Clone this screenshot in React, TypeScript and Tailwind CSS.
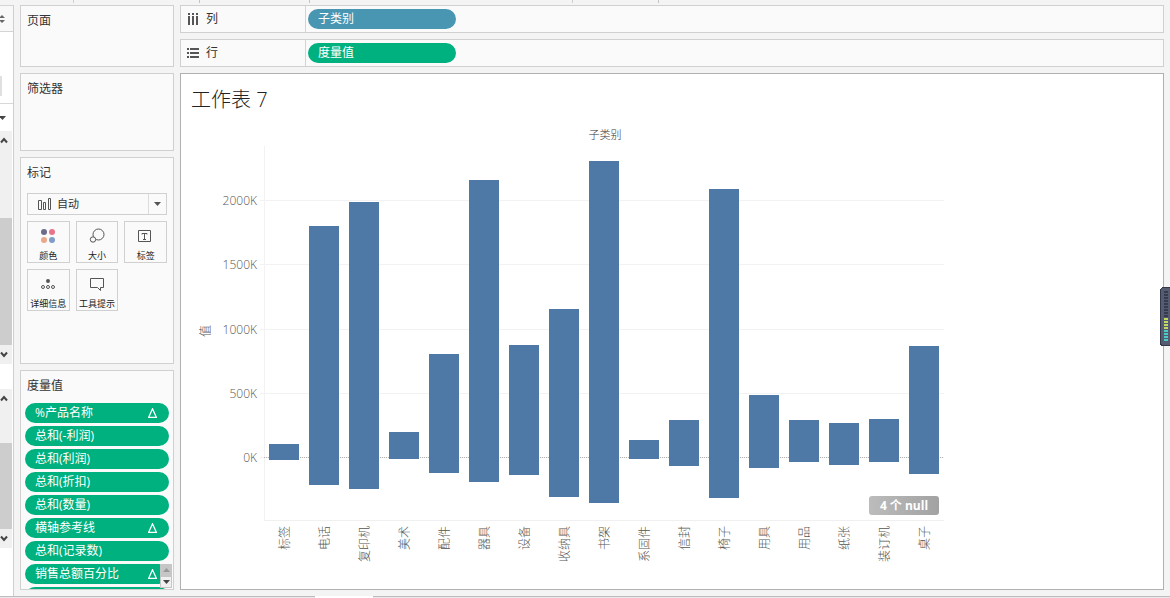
import type { ReactNode } from "react";

const shelves = [
  { label: "列", pill: "子类别", tone: "bg-[#4996b2]", vertical: true },
  { label: "行", pill: "度量值", tone: "bg-[#00b180]", vertical: false },
];

const measures = [
  { name: "%产品名称", calc: true },
  { name: "总和(-利润)", calc: false },
  { name: "总和(利润)", calc: false },
  { name: "总和(折扣)", calc: false },
  { name: "总和(数量)", calc: false },
  { name: "横轴参考线", calc: true },
  { name: "总和(记录数)", calc: false },
  { name: "销售总额百分比", calc: true },
];

// high / low are in thousands
const bars = [
  { name: "标签", high: 108, low: -18 },
  { name: "电话", high: 1803, low: -212 },
  { name: "复印机", high: 1990, low: -243 },
  { name: "美术", high: 200, low: -10 },
  { name: "配件", high: 809, low: -120 },
  { name: "器具", high: 2161, low: -190 },
  { name: "设备", high: 877, low: -134 },
  { name: "收纳具", high: 1157, low: -307 },
  { name: "书架", high: 2309, low: -352 },
  { name: "系固件", high: 138, low: -10 },
  { name: "信封", high: 293, low: -64 },
  { name: "椅子", high: 2092, low: -313 },
  { name: "用具", high: 488, low: -80 },
  { name: "用品", high: 293, low: -33 },
  { name: "纸张", high: 270, low: -58 },
  { name: "装订机", high: 302, low: -33 },
  { name: "桌子", high: 869, low: -128 },
];

const ticks = [2000, 1500, 1000, 500, 0];

const LEFT = 73;
const TOP = 24;
const BOTTOM = 398;
const ZERO = 336;
const STEP = 40;
const RIGHT = LEFT + STEP * bars.length;
const y = (v: number) => Math.round(ZERO - v * 0.1285);

function ShelfIcon({ vertical }: { vertical: boolean }) {
  return (
    <svg
      width="12"
      height="12"
      viewBox="0 0 12 12"
      fill="#555"
      shapeRendering="crispEdges"
      className={vertical ? "rotate-90" : ""}
      aria-hidden="true"
    >
      {[1, 5, 9].map((row) => (
        <g key={row}>
          <rect x="0" y={row} width="2" height="2" />
          <rect x="3" y={row} width="9" height="2" />
        </g>
      ))}
    </svg>
  );
}

function Card({ title, className, children }: { title: string; className: string; children?: ReactNode }) {
  return (
    <section className={`flex flex-col overflow-hidden border border-[#d0d0d0] bg-[#fafafa] ${className}`}>
      <h2 className="shrink-0 px-[6px] pt-[5px] text-xs leading-5 text-[#333]">{title}</h2>
      {children}
    </section>
  );
}

function MarkButton({ label, children }: { label: string; children: ReactNode }) {
  return (
    <button className="flex h-[42px] flex-col items-center justify-between border border-[#d0d0d0] bg-[#fafafa] pt-[6px] text-[9px] leading-3 whitespace-nowrap text-[#222]">
      <svg width="16" height="16" viewBox="0 0 16 16" fill="none" stroke="#555" aria-hidden="true">
        {children}
      </svg>
      {label}
    </button>
  );
}

function ScrollArrow({ up }: { up?: boolean }) {
  return (
    <button
      aria-label={up ? "向上滚动" : "向下滚动"}
      className="flex h-[19px] w-full shrink-0 items-center justify-end bg-[#f0f0f0] pr-1"
    >
      <svg width="8" height="7" viewBox="0 0 8 7" fill="none" stroke="#444" strokeWidth="2" aria-hidden="true">
        <path d={up ? "M1 5.5 4 2l3 3.5" : "M1 1.5 4 5l3-3.5"} />
      </svg>
    </button>
  );
}

// Lower edge of the toolbar, only its separators reach down here
function ToolbarEdge() {
  return (
    <header className="flex h-[5px] shrink-0 items-start">
      <div className="h-[3px] w-[74px] border-r border-[#d0d0d0]" />
      <div className="h-[3px] w-[126px] border-r border-[#c4c4c4]" />
      <div className="h-[3px] w-[110px] border-r border-[#c4c4c4]" />
      <div className="h-[3px] w-[263px] border-r border-[#d0d0d0]" />
      <div className="h-[3px] w-[86px] border-r border-[#c4c4c4]" />
    </header>
  );
}

// The right edge of the data pane, the rest of it is scrolled out of view
function DataPaneEdge() {
  return (
    <aside className="flex w-[14px] shrink-0 flex-col border-r border-[#cfcfcf] bg-white">
      <div className="flex h-[27px] shrink-0 items-center border-y border-[#d4d4d4] bg-[#f8f8f8]">
        <svg width="6" height="8" viewBox="0 0 6 8" fill="#666" aria-hidden="true">
          <path d="M2 0 5 3H-1zM2 8 5 5H-1z" />
        </svg>
      </div>
      <div className="flex h-[71px] shrink-0 flex-col justify-end pb-[7px]">
        <div className="h-5 w-[2px] bg-[#e0e0e0]" />
      </div>
      <div className="flex h-7 shrink-0 items-center border-t border-[#d8d8d8]">
        <svg width="6" height="4" viewBox="0 0 6 4" fill="#444" aria-hidden="true">
          <path d="M-1 0h7L2.5 4z" />
        </svg>
      </div>
      <div className="flex h-[233px] w-3 shrink-0 flex-col bg-[#f0f0f0]">
        <ScrollArrow up />
        <div className="mt-auto h-[127px] bg-[#cdcdcd]" />
        <ScrollArrow />
      </div>
      <div className="h-[25px] shrink-0" />
      <div className="flex h-[159px] w-3 shrink-0 flex-col bg-[#f0f0f0]">
        <ScrollArrow up />
        <div className="mt-auto h-[86px] bg-[#cdcdcd]" />
        <ScrollArrow />
      </div>
    </aside>
  );
}

function MarksCard() {
  return (
    <Card title="标记" className="h-[207px] shrink-0">
      <div className="mt-[10px] flex flex-col gap-[6px] px-[6px]">
        <div className="relative h-[22px] border border-[#d0d0d0] bg-[#fafafa]">
          <select
            aria-label="标记类型"
            className="block h-full w-full appearance-none bg-transparent pl-[29px] text-[11px] leading-5 text-[#333] outline-none"
          >
            <option>自动</option>
          </select>
          <svg
            width="14"
            height="12"
            viewBox="0 0 14 12"
            fill="none"
            stroke="#555"
            className="pointer-events-none absolute top-1 left-[10px]"
            aria-hidden="true"
          >
            <path d="M.5 2.5h3v9h-3zM5.5 4.5h2v7h-2zM10.5.5h2v11h-2z" />
          </svg>
          <span className="pointer-events-none absolute inset-y-0 right-0 flex w-[18px] items-center justify-center border-l border-[#dcdcdc]">
            <svg width="7" height="4" viewBox="0 0 7 4" fill="#555" aria-hidden="true">
              <path d="M0 0h7L3.5 4z" />
            </svg>
          </span>
        </div>
        <div className="grid grid-cols-3 gap-[6px]">
          <MarkButton label="颜色">
            <g stroke="none">
              <circle cx="4" cy="4" r="3" fill="#6b6b8a" />
              <circle cx="12" cy="4" r="3" fill="#e8738a" />
              <circle cx="4" cy="12" r="3" fill="#eba78b" />
              <circle cx="12" cy="12" r="3" fill="#7f9dc6" />
            </g>
          </MarkButton>
          <MarkButton label="大小">
            <circle cx="9.5" cy="6.5" r="5.5" />
            <circle cx="4" cy="11.5" r="2.7" fill="#fafafa" />
          </MarkButton>
          <MarkButton label="标签">
            <path d="M.5 2.5h12v11h-12z" />
            <path d="M4 6.5v-1h5v1M6.5 5.5v6M5 11.5h3" />
          </MarkButton>
          <MarkButton label="详细信息">
            <circle cx="8" cy="5" r="2" fill="#555" stroke="none" />
            <circle cx="3" cy="11" r="1.5" />
            <circle cx="8" cy="11" r="1.5" />
            <circle cx="13" cy="11" r="1.5" />
          </MarkButton>
          <MarkButton label="工具提示">
            <path d="M1.5 2.5h13v9h-3v3l-3-3h-7z" />
          </MarkButton>
        </div>
      </div>
    </Card>
  );
}

function MeasuresCard() {
  return (
    <Card title="度量值" className="relative min-h-0 flex-1">
      <ul className="mt-[7px] flex flex-col gap-[3px] px-1">
        {measures.map((m) => (
          <li
            key={m.name}
            className="flex h-5 shrink-0 items-center justify-between rounded-full bg-[#00b180] pr-3 pl-[10px] text-xs leading-5 text-white"
          >
            {m.name}
            {m.calc && (
              <svg
                width="9"
                height="10"
                viewBox="0 0 9 10"
                fill="none"
                stroke="#fff"
                strokeWidth="1.3"
                aria-label="表计算"
              >
                <path d="M4.5.8 8.3 9.3H.7z" />
              </svg>
            )}
          </li>
        ))}
        <li className="h-5 shrink-0 rounded-full bg-[#00b180]" />
      </ul>
      <div className="absolute right-[1px] bottom-[1px] flex w-3 flex-col">
        <button aria-label="上一项" className="flex h-3 items-center justify-center bg-[#c6c6c6]">
          <svg width="7" height="4" viewBox="0 0 7 4" fill="#999" aria-hidden="true">
            <path d="M0 4h7L3.5 0z" />
          </svg>
        </button>
        <button aria-label="下一项" className="flex h-3 items-center justify-center border border-[#c6c6c6] bg-[#f0f0f0]">
          <svg width="7" height="4" viewBox="0 0 7 4" className="shrink-0" fill="#444" aria-hidden="true">
            <path d="M0 0h7L3.5 4z" />
          </svg>
        </button>
      </div>
    </Card>
  );
}

function Chart() {
  return (
    <svg width="764" height="460" viewBox="0 0 764 460" className="block font-light" role="img" aria-label="子类别">
      <g shapeRendering="crispEdges">
        {ticks.map((t) => (
          <rect key={t} x={LEFT - 4} y={y(t) - 1} width={RIGHT - LEFT + 4} height="1" fill="#f2f2f2" />
        ))}
        <rect x={LEFT} y={TOP} width="1" height={BOTTOM - TOP} fill="#f2f2f2" />
        <rect x={LEFT} y={BOTTOM} width={RIGHT - LEFT} height="1" fill="#f0f0f0" />
        <path d={`M${LEFT} ${ZERO - 0.5}H${RIGHT}`} stroke="#b4b4b4" strokeDasharray="1 1" />
        {bars.map((b, i) => (
          <rect
            key={b.name}
            x={LEFT + 5 + i * STEP}
            y={y(b.high)}
            width="30"
            height={y(b.low) - y(b.high)}
            fill="#4e79a7"
          />
        ))}
      </g>
      <text x={LEFT + 341} y="17" textAnchor="middle" fontSize="11" fill="#333">
        子类别
      </text>
      <g fontSize="12" fill="#555">
        {ticks.map((t) => (
          <text key={t} x={LEFT - 7} y={y(t) + 4} textAnchor="end">
            {t}K
          </text>
        ))}
        <text transform="translate(19 209) rotate(-90)" textAnchor="middle">
          值
        </text>
        {bars.map((b, i) => (
          <text key={b.name} transform={`translate(${LEFT + 25 + i * STEP} 404) rotate(-90)`} textAnchor="end">
            {b.name}
          </text>
        ))}
      </g>
    </svg>
  );
}

function VolumeMeter() {
  return (
    <svg
      width="10"
      height="59"
      viewBox="0 0 10 59"
      className="absolute top-[287px] right-0"
      shapeRendering="crispEdges"
      aria-hidden="true"
    >
      <rect x=".5" y=".5" width="14" height="58" rx="3" fill="#555b70" stroke="#35384a" />
      {Array.from({ length: 17 }, (_, i) => (
        <rect
          key={i}
          x="4"
          y={4 + i * 3}
          width="4"
          height="2"
          fill={i < 9 ? "#363b4e" : i < 13 ? "#c2d860" : "#4ccbc4"}
        />
      ))}
    </svg>
  );
}

export default function App() {
  return (
    <div className="relative flex h-screen flex-col overflow-hidden bg-[#f4f4f4] font-['Open_Sans','Noto_Sans_CJK_SC',sans-serif]">
      <ToolbarEdge />
      <div className="flex min-h-0 flex-1">
        <DataPaneEdge />
        <div className="flex min-w-0 flex-1 gap-[6px] px-[6px] pb-[6px]">
          <div className="flex w-[154px] shrink-0 flex-col gap-[6px]">
            <Card title="页面" className="h-[62px] shrink-0" />
            <Card title="筛选器" className="h-[78px] shrink-0" />
            <MarksCard />
            <MeasuresCard />
          </div>
          <main className="flex min-w-0 flex-1 flex-col gap-[6px]">
            {shelves.map((s) => (
              <div key={s.label} className="flex h-7 shrink-0 items-stretch border border-[#d0d0d0] bg-[#fafafa]">
                <div className="flex w-[125px] items-center gap-[7px] border-r border-[#dcd0d0] pl-[6px] text-xs text-[#333]">
                  <ShelfIcon vertical={s.vertical} />
                  {s.label}
                </div>
                <div className="flex items-center pl-[2px]">
                  <button className={`h-5 w-[148px] rounded-full px-[10px] text-left text-xs leading-5 text-white ${s.tone}`}>
                    {s.pill}
                  </button>
                </div>
              </div>
            ))}
            <section className="relative min-h-0 flex-1 overflow-hidden border border-[#b0b0b0] bg-white pl-[10px]">
              <h1 className="h-12 pt-[13px] text-xl leading-[26px] font-light text-[#222]">工作表 7</h1>
              <Chart />
              <button className="absolute top-[422px] left-[688px] h-[19px] w-[70px] rounded-[3px] bg-linear-to-r from-[#bcbcbc] to-[#a2a2a2] text-xs leading-[19px] font-bold text-white">
                4 个 null
              </button>
            </section>
          </main>
        </div>
      </div>
      <footer className="flex h-[2px] shrink-0">
        <div className="w-[315px] border-t border-[#bdbdbd] bg-[#e8e8e8]" />
        <div className="w-[58px] bg-white" />
        <div className="flex-1 border-t border-[#bdbdbd] bg-[#e8e8e8]" />
      </footer>
      <VolumeMeter />
    </div>
  );
}
